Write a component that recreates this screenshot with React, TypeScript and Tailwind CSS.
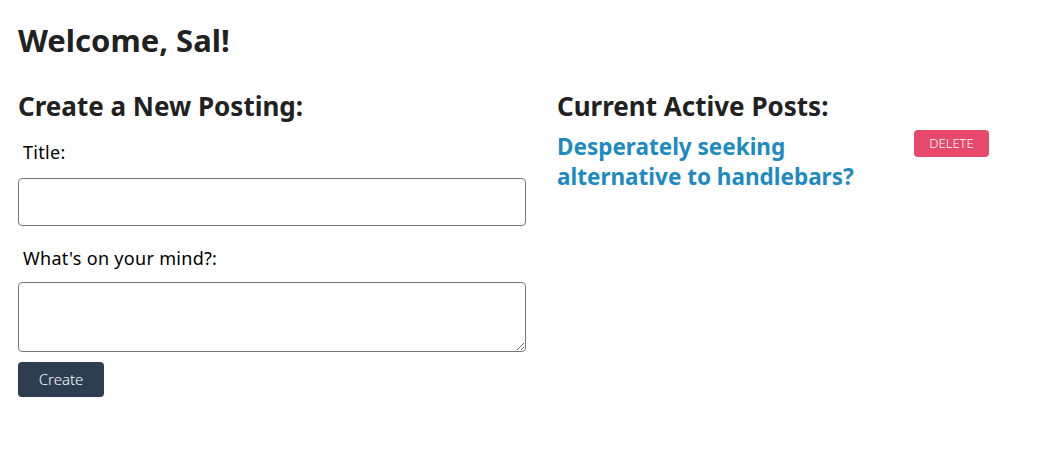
export default function App() {
    return (
        <div className="min-h-screen bg-white px-[18px] pt-[18px] text-[#212121]" style={{ fontFamily: '"Noto Sans", "Open Sans", sans-serif' }}>
            <h1 className="text-[31px] font-bold leading-[44px]">Welcome, Sal!</h1>
            <div className="mt-[26px] flex gap-[31px]">
                {/* New posting form */}
                <div className="w-[508px]">
                    <h2 className="text-[26px] font-bold leading-[36px]">Create a New Posting:</h2>
                    <form className="mt-[14px]">
                        <label htmlFor="title" className="block pl-[5px] text-[18px] leading-[28px] tracking-[0.3px] text-black">
                            Title:
                        </label>
                        <input
                            id="title"
                            type="text"
                            className="mt-[12px] block h-[48px] w-full rounded-[4px] border border-[#767676] px-2 outline-none"
                        />
                        <label htmlFor="body" className="mt-[18px] block pl-[5px] text-[18px] leading-[28px] tracking-[0.3px] text-black">
                            What's on your mind?:
                        </label>
                        <textarea
                            id="body"
                            className="mt-[10px] block h-[70px] w-full rounded-[4px] border border-[#767676] px-2 outline-none"
                        />
                        <button
                            type="button"
                            className="mt-[10px] h-[35px] w-[86px] rounded-[4px] bg-[#2c3e50] text-[15px] font-light text-white"
                        >
                            Create
                        </button>
                    </form>
                </div>

                {/* Active posts */}
                <div className="w-[432px]">
                    <h2 className="text-[26px] font-bold leading-[36px]">Current Active Posts:</h2>
                    <div className="mt-[6px] flex items-start justify-between">
                        <a href="#" className="w-[330px] pt-[2px] text-[22.5px] font-bold leading-[30px] text-[#1f8ac0]">
                            Desperately seeking alternative to handlebars?
                        </a>
                        <button
                            type="button"
                            className="h-[27px] w-[75px] rounded-[4px] bg-[#e8496a] text-[13px] font-light uppercase text-white"
                        >
                            Delete
                        </button>
                    </div>
                </div>
            </div>
        </div>
    );
}
